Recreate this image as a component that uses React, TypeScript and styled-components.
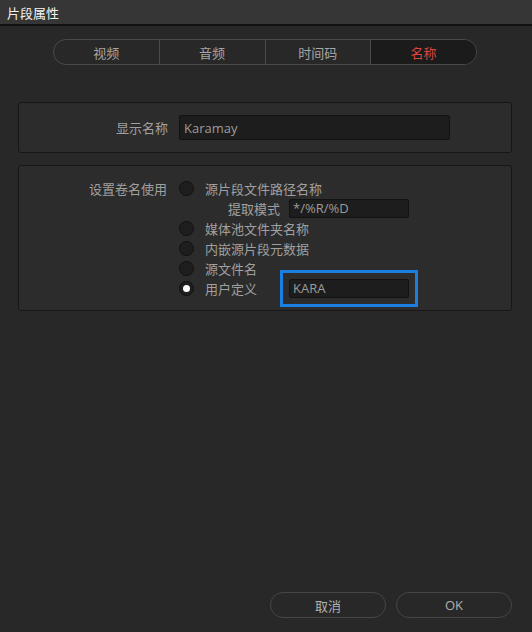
import React from "react";
import styled, { createGlobalStyle } from "styled-components";

const GlobalStyle = createGlobalStyle`
  html, body {
    margin: 0;
    padding: 0;
    background: #282828;
  }
  body {
    font-family: "Open Sans", "Noto Sans CJK SC", sans-serif;
    font-size: 13px;
    color: #a2a2a2;
  }
  * { box-sizing: border-box; }
`;

const Window = styled.div`
  width: 532px;
  height: 632px;
  display: flex;
  flex-direction: column;
  background: #282828;
`;

const TitleBar = styled.div`
  height: 26px;
  flex: none;
  background: #363636;
  border-bottom: 2px solid #111;
  display: flex;
  align-items: center;
  padding-left: 7px;
  color: #f2f2f2;
  font-size: 13px;
  font-family: "Noto Sans CJK SC", sans-serif;
`;

const Tabs = styled.div`
  margin: 13px 0 0 53px;
  width: 424px;
  height: 26px;
  display: flex;
  border: 1px solid #4a4a4a;
  border-radius: 13px;
  overflow: hidden;
`;

const Tab = styled.div<{ $active?: boolean }>`
  flex: 1;
  display: flex;
  align-items: center;
  justify-content: center;
  font-family: "Noto Sans CJK SC", sans-serif;
  font-size: 13px;
  color: ${(p) => (p.$active ? "#d8463e" : "#a6a6a6")};
  background: ${(p) => (p.$active ? "#1b1b1b" : "transparent")};
  & + & {
    border-left: 1px solid #4a4a4a;
  }
`;

const Panel = styled.div`
  margin-left: 18px;
  width: 494px;
  background: #2c2c2c;
  border: 1px solid #161616;
  border-radius: 3px;
`;

const NamePanel = styled(Panel)`
  margin-top: 37px;
  height: 51px;
  display: grid;
  grid-template-columns: 149px 271px;
  column-gap: 11px;
  align-items: center;
`;

const ReelPanel = styled(Panel)`
  margin-top: 12px;
  height: 146px;
  padding: 12px 0;
  display: grid;
  grid-template-columns: 148px 14px auto;
  grid-auto-rows: 20px;
  align-items: center;
`;

const Label = styled.div`
  grid-column: 1;
  text-align: right;
  font-family: "Noto Sans CJK SC", sans-serif;
  color: #a0a0a0;
  white-space: nowrap;
`;

const Field = styled.div`
  height: 25px;
  background: #1d1d1d;
  border: 1px solid #121212;
  border-radius: 2px;
  display: flex;
  align-items: center;
  padding-left: 4px;
  color: #9c9c9c;
  font-family: "Open Sans", sans-serif;
  font-size: 13px;
  white-space: nowrap;
`;

const RadioCell = styled.div`
  grid-column: 2;
  margin-left: 12px;
  width: 15px;
  height: 15px;
  display: flex;
`;

const Radio = styled.div<{ $checked?: boolean }>`
  width: 15px;
  height: 15px;
  border-radius: 50%;
  background: #1e1e1e;
  border: 1px solid #111;
  display: flex;
  align-items: center;
  justify-content: center;
  &::after {
    content: "";
    display: ${(p) => (p.$checked ? "block" : "none")};
    width: 7px;
    height: 7px;
    border-radius: 50%;
    background: #ffffff;
  }
`;

const OptionText = styled.div`
  grid-column: 3;
  margin-left: 24px;
  display: flex;
  align-items: center;
  font-family: "Noto Sans CJK SC", sans-serif;
  color: #a0a0a0;
  white-space: nowrap;
`;

const SubLabel = styled.span<{ $w: number; $right?: boolean }>`
  width: ${(p) => p.$w}px;
  text-align: ${(p) => (p.$right ? "right" : "left")};
  padding-right: ${(p) => (p.$right ? 9 : 0)}px;
`;

const SmallField = styled(Field)`
  width: 120px;
  height: 19px;
  padding-left: 3px;
`;

const Highlighted = styled(SmallField)`
  position: relative;
  &::after {
    content: "";
    position: absolute;
    left: -10px;
    top: -10px;
    right: -10px;
    bottom: -10px;
    border: 3px solid #1a7fe0;
    pointer-events: none;
  }
`;

const Footer = styled.div`
  margin-top: auto;
  margin-bottom: 14px;
  align-self: flex-end;
  margin-right: 20px;
  display: flex;
  gap: 10px;
`;

const Button = styled.div`
  width: 116px;
  height: 26px;
  border: 1px solid #454545;
  border-radius: 13px;
  display: flex;
  align-items: center;
  justify-content: center;
  color: #b0b0b0;
  font-family: "Open Sans", "Noto Sans CJK SC", sans-serif;
  font-size: 13px;
`;

const options = [
  { text: "源片段文件路径名称", radio: true },
  { text: "提取模式", sub: true },
  { text: "媒体池文件夹名称", radio: true },
  { text: "内嵌源片段元数据", radio: true },
  { text: "源文件名", radio: true },
  { text: "用户定义", radio: true, checked: true, user: true },
];

export default function App() {
  return (
    <>
      <GlobalStyle />
      <Window>
        <TitleBar>片段属性</TitleBar>
        <Tabs>
          <Tab>视频</Tab>
          <Tab>音频</Tab>
          <Tab>时间码</Tab>
          <Tab $active>名称</Tab>
        </Tabs>
        <NamePanel>
          <Label>显示名称</Label>
          <Field>Karamay</Field>
        </NamePanel>
        <ReelPanel>
          {options.map((o, i) => (
            <React.Fragment key={i}>
              <Label>{i === 0 ? "设置卷名使用" : ""}</Label>
              <RadioCell>{o.radio && <Radio $checked={o.checked} />}</RadioCell>
              {o.sub ? (
                <OptionText>
                  <SubLabel $w={84} $right>
                    提取模式
                  </SubLabel>
                  <SmallField>*/%R/%D</SmallField>
                </OptionText>
              ) : o.user ? (
                <OptionText>
                  <SubLabel $w={84}>{o.text}</SubLabel>
                  <Highlighted>KARA</Highlighted>
                </OptionText>
              ) : (
                <OptionText>{o.text}</OptionText>
              )}
            </React.Fragment>
          ))}
        </ReelPanel>
        <Footer>
          <Button>取消</Button>
          <Button>OK</Button>
        </Footer>
      </Window>
    </>
  );
}
